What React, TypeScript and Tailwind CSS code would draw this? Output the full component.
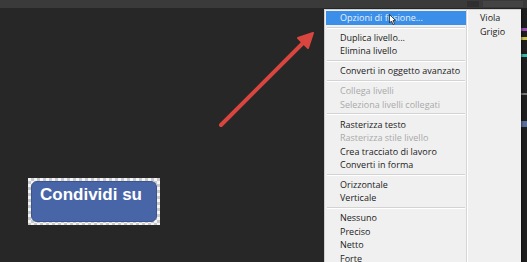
import React from "react";

type Item = { label: string; disabled?: boolean; active?: boolean } | "sep";

const items: Item[] = [
  { label: "Opzioni di fusione...", active: true },
  "sep",
  { label: "Duplica livello..." },
  { label: "Elimina livello" },
  "sep",
  { label: "Converti in oggetto avanzato" },
  "sep",
  { label: "Collega livelli", disabled: true },
  { label: "Seleziona livelli collegati", disabled: true },
  "sep",
  { label: "Rasterizza testo" },
  { label: "Rasterizza stile livello", disabled: true },
  { label: "Crea tracciato di lavoro" },
  { label: "Converti in forma" },
  "sep",
  { label: "Orizzontale" },
  { label: "Verticale" },
  "sep",
  { label: "Nessuno" },
  { label: "Preciso" },
  { label: "Netto" },
  { label: "Forte" },
];

function Cursor() {
  return (
    <svg width="7" height="11" viewBox="0 0 7 11" className="absolute left-[63px] top-[3px]">
      <path d="M0.5 0.5 L0.5 9 L2.5 7 L4 10.5 L5.5 9.8 L4 6.5 L6.5 6.5 Z" fill="#fff" stroke="#222" strokeWidth="0.8" />
    </svg>
  );
}

function ContextMenu() {
  return (
    <div className="absolute left-[324px] top-[9px] flex h-[262px] w-[197px] border-l border-t border-[#cfcfcf] bg-[#f0f0f0] shadow-[1px_1px_2px_rgba(0,0,0,0.5)] font-['Open_Sans',sans-serif] text-[9px] text-[#1b1b1b]">
      <div className="flex w-[141px] flex-col pt-[1px] pl-[1px]">
        {items.map((it, i) =>
          it === "sep" ? (
            <div key={i} className="flex h-[6.4px] flex-col justify-center px-[1px]">
              <div className="h-px bg-[#d3d3d3]" />
              <div className="h-px bg-white" />
            </div>
          ) : (
            <div
              key={i}
              className={
                it.active
                  ? "relative flex h-[13.5px] items-center bg-[#3b8fe8] pl-[14px] text-[#e8f1fc]"
                  : it.disabled
                  ? "flex h-[13.5px] items-center pl-[14px] text-[#a9a9a9]"
                  : "flex h-[13.5px] items-center pl-[14px]"
              }
            >
              {it.label}
              {it.active && <Cursor />}
            </div>
          )
        )}
      </div>
      <div className="flex w-[3px]">
        <div className="w-px bg-[#d6d6d6]" />
        <div className="w-px bg-white" />
      </div>
      <div className="flex flex-1 flex-col pt-[1px] pl-[11px]">
        <div className="flex h-[13.5px] items-center">Viola</div>
        <div className="flex h-[13.5px] items-center">Grigio</div>
      </div>
    </div>
  );
}

function Arrow() {
  return (
    <svg width="527" height="262" className="pointer-events-none absolute left-0 top-0">
      <line x1="221" y1="125" x2="305" y2="41" stroke="#d9463f" strokeWidth="4" strokeLinecap="round" />
      <polygon points="313,33 298,38 308,48" fill="#d9463f" stroke="#d9463f" strokeWidth="2" strokeLinejoin="round" />
    </svg>
  );
}

export default function App() {
  return (
    <div className="relative flex h-[262px] w-[527px] flex-col overflow-hidden bg-[#272727]">
      <div className="flex h-[8px] justify-end bg-[#3a3a3a]">
        <div className="flex w-[60px] gap-[4px] pt-[1px]">
          <div className="h-[6px] w-[12px] bg-[#2f2f2f]" />
          <div className="h-[6px] w-[40px] bg-[#444]" />
        </div>
      </div>
      <div className="relative flex-1">
        <div className="ml-[28px] mt-[170px] w-[132px] bg-[repeating-conic-gradient(#c9c9c9_0_25%,#f4f4f4_0_50%)] bg-[length:6px_6px] p-[3px]">
          <div className="h-[41px] rounded-[6px] border border-[#3a5490] bg-[#4865a8] pl-[8px] pt-[3px] font-['Liberation_Sans',sans-serif] text-[17px] font-bold leading-[19px] text-white">
            Condividi su
          </div>
        </div>
        <div className="absolute right-0 top-0 flex h-full w-[6px] flex-col gap-[6px] bg-[#1e1e1e] pt-[20px]">
          <div className="h-[3px] bg-[#9b4fb0]" />
          <div className="h-[3px] bg-[#c9c24a]" />
          <div className="mt-[8px] h-[3px] bg-[#3fb8a8]" />
          <div className="mt-[30px] h-[2px] bg-[#777]" />
          <div className="mt-[20px] h-[6px] bg-[#5a6f9a]" />
        </div>
      </div>
      <ContextMenu />
      <Arrow />
    </div>
  );
}
